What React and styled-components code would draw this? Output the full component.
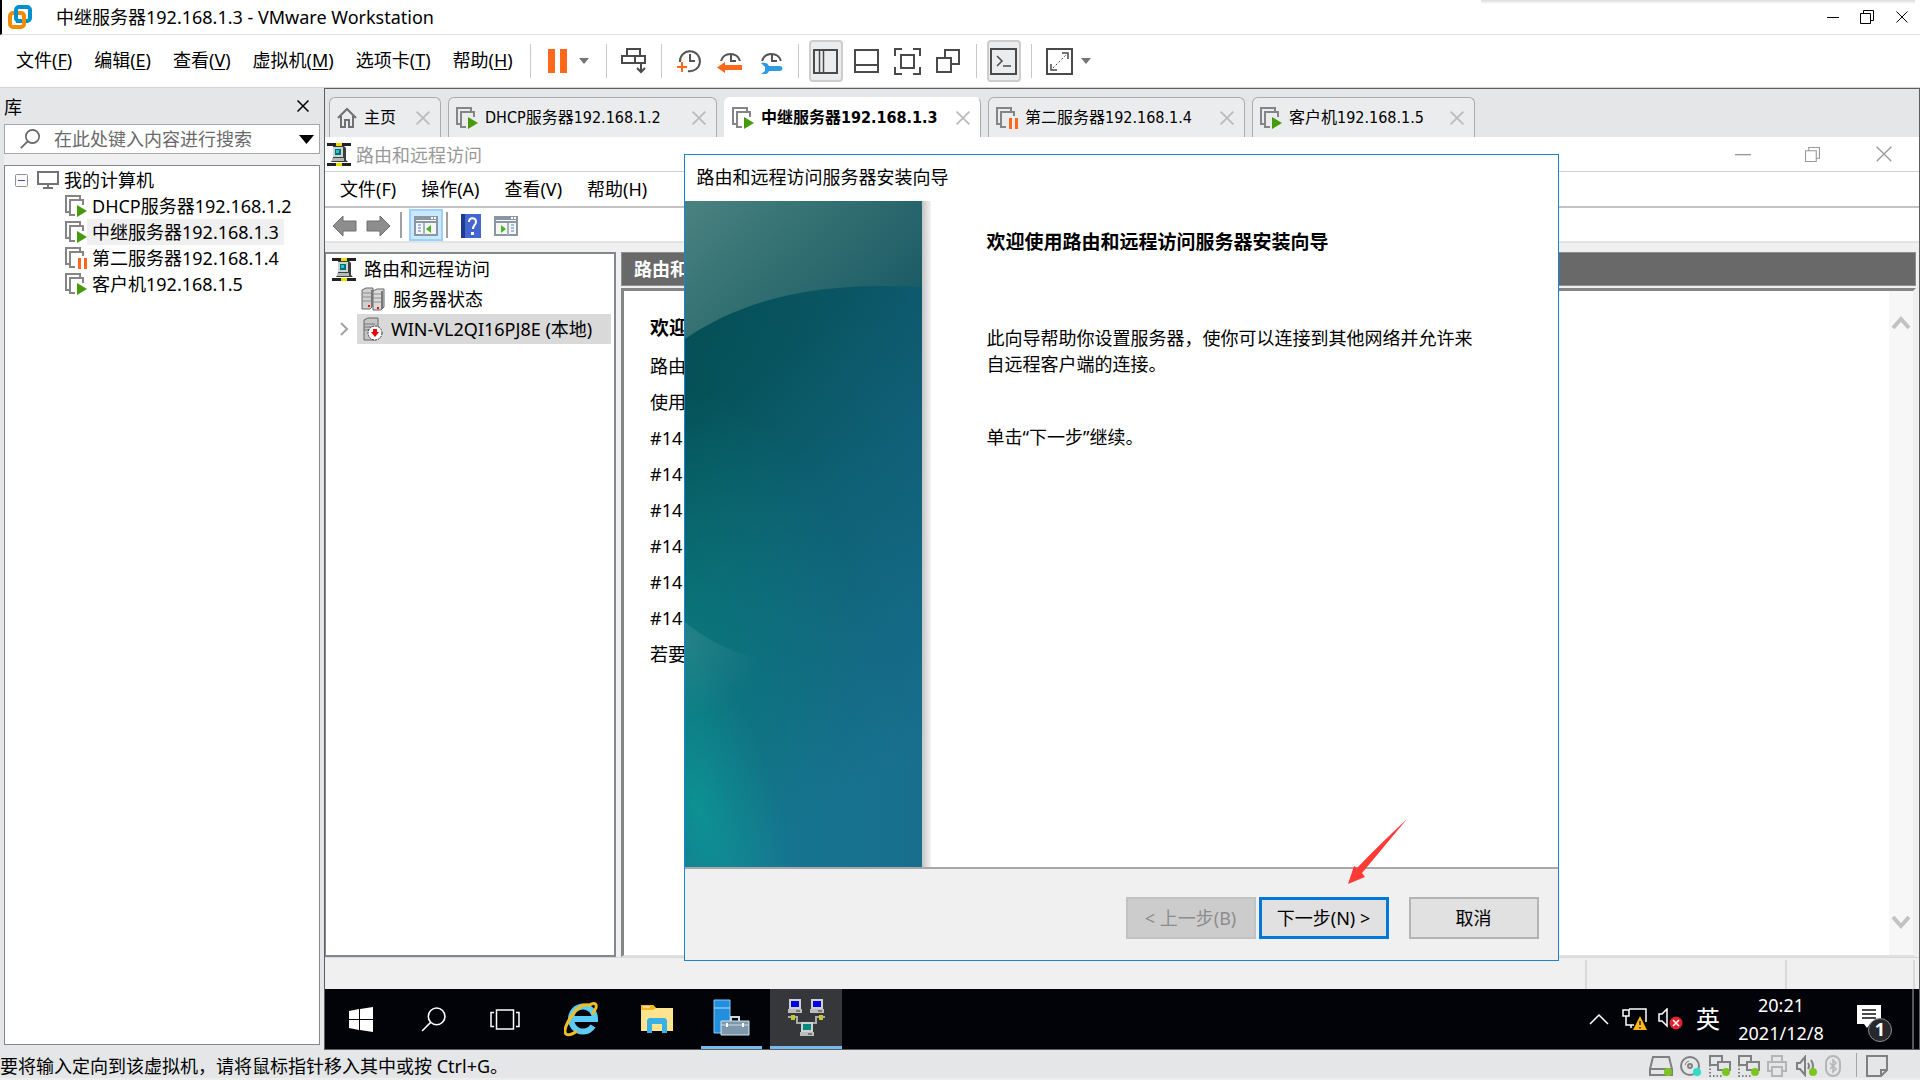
import React from "react";
import styled, { createGlobalStyle, css } from "styled-components";

const uiFont = '"Noto Sans", "Noto Sans CJK SC", sans-serif';
const tabFont = '"DejaVu Sans Condensed", "Noto Sans CJK SC", sans-serif';

const GlobalStyle = createGlobalStyle`
  * { box-sizing: border-box; }
  body { margin: 0; background: #e4e6e8; }
  body, button, input { font-family: ${uiFont}; font-size: 18px; color: #000; }
  button { margin: 0; padding: 0; border: 0; background: none; white-space: nowrap; line-height: 24px; }
  ul { list-style: none; margin: 0; padding: 0; }
  h1, h2, p { margin: 0; font-weight: 400; font-size: 18px; }
  svg { display: block; flex: none; }
`;

/* ---------- host window ---------- */

const Window = styled.div`
  display: flex;
  flex-direction: column;
  height: 100vh;
  min-width: 1300px;
  overflow: hidden;
`;

const TitleBar = styled.header`
  display: flex;
  align-items: center;
  height: 35px;
  padding-left: 6px;
  border-left: 2px solid #000;
  border-bottom: 1px solid #dfdfdf;
  background: #fff;
  position: relative;
  h1 { flex: 1; margin-left: 24px; line-height: 34px; }
`;

const TopShade = styled.div`
  position: absolute;
  top: 0;
  right: 5px;
  width: 434px;
  height: 4px;
  background: linear-gradient(#dcdcdc, #fff);
`;

const WindowButton = styled.button`
  display: flex;
  align-items: center;
  justify-content: center;
  width: ${(p) => p.$w}px;
  height: 32px;
`;

const MenuBar = styled.div`
  display: flex;
  align-items: center;
  height: 53px;
  background: #fff;
  border-bottom: 1px solid #d4d4d4;
`;

const Menus = styled.nav`
  display: flex;
  gap: 22px;
  padding: 0 17px 2px 16px;
  u { text-underline-offset: 2px; text-decoration-thickness: 1px; }
`;

const ToolGroup = styled.div`
  display: flex;
  align-items: center;
  gap: 7px;
  height: 34px;
  padding: 0 10px;
  border-left: 1px solid #c9c9c9;
`;

const ToolButton = styled.button`
  display: flex;
  align-items: center;
  justify-content: center;
  gap: ${(p) => p.$gap || 0}px;
  width: ${(p) => p.$w || 34}px;
  height: 42px;
  border-radius: 4px;
  ${(p) => p.$on && css`background: #ebecee; border: 2px solid #cdcdcd;`}
`;

const Workspace = styled.main`
  display: flex;
  flex: 1;
  min-height: 0;
`;

/* ---------- library panel ---------- */

const Library = styled.aside`
  display: flex;
  flex-direction: column;
  flex: none;
  width: 324px;
  padding: 0 4px 5px;
  background: #e4e6e8;
`;

const LibraryHead = styled.div`
  display: flex;
  align-items: center;
  justify-content: space-between;
  height: 36px;
  padding-right: 11px;
`;

const SearchBox = styled.label`
  display: flex;
  align-items: center;
  height: 30px;
  padding: 0 5px 0 15px;
  background: #fff;
  border: 1px solid #a6a6a6;
  input { flex: 1; min-width: 0; margin-left: 14px; padding: 0; border: 0; outline: 0; background: none; line-height: 26px; }
  input::placeholder { color: #6a6a6a; opacity: 1; }
`;

const LibraryTree = styled.ul`
  flex: 1;
  margin-top: 11px;
  padding-top: 1px;
  background: #fff;
  border: 1px solid #828790;
  box-shadow: 0 -11px 0 #f0f0f0;
`;

const LibraryRow = styled.li`
  display: flex;
  align-items: center;
  height: 26px;
  padding-left: ${(p) => (p.$child ? 60 : 10)}px;
  button { height: 26px; padding: 0 5px; background: ${(p) => (p.$on ? "#f0f0f0" : "none")}; }
  svg + svg { margin-left: 9px; }
`;

/* ---------- tabs ---------- */

const Stage = styled.section`
  display: flex;
  flex-direction: column;
  flex: 1;
  min-width: 0;
  border: 1px solid #5c5e60;
`;

const Tabs = styled.div`
  display: flex;
  gap: 7px;
  height: 48px;
  padding: 8px 0 0 4px;
  background: #e4e6e8;
`;

const Tab = styled.div`
  display: flex;
  align-items: center;
  width: ${(p) => p.$w}px;
  padding: 0 10px 0 7px;
  border: 1px solid #a9abae;
  border-bottom: 0;
  border-radius: 6px 6px 0 0;
  background: ${(p) => (p.$on ? "#fff" : "#ebecee")};
  ${(p) => p.$on && "border-color: #fff #a9abae #fff #fff;"}
  button:first-of-type {
    flex: 1;
    margin-left: 7px;
    text-align: left;
    font-family: ${tabFont};
    font-size: 16px;
    font-weight: ${(p) => (p.$on ? 700 : 400)};
  }
`;

/* ---------- guest desktop ---------- */

const Guest = styled.div`
  position: relative;
  display: flex;
  flex-direction: column;
  flex: 1;
  min-height: 0;
  background: #f0f0f0;
`;

const GuestTitle = styled.div`
  display: flex;
  align-items: center;
  height: 35px;
  padding-left: 2px;
  background: #fff;
  border-bottom: 1px solid #d0d0d0;
  h2 { flex: 1; margin-left: 5px; color: #999; }
`;

const GuestMenus = styled.nav`
  display: flex;
  align-items: center;
  gap: 25px;
  height: 36px;
  padding-left: 15px;
  background: #fff;
  border-bottom: 2px solid #c3c3c3;
`;

const GuestTools = styled.div`
  display: flex;
  align-items: center;
  height: 35px;
  padding: 1px 0 0 7px;
  background: #fff;
  border-bottom: 2px solid #e3e3e3;
`;

const GuestTool = styled.button`
  display: flex;
  align-items: center;
  justify-content: center;
  width: ${(p) => p.$w || 34}px;
  height: 32px;
  padding-top: 2px;
  ${(p) => p.$on && css`background: #cce8ff; border: 2px solid #99d1ff;`}
`;

const GuestRule = styled.span`
  width: 2px;
  height: 26px;
  margin: 0 ${(p) => p.$after}px 0 ${(p) => p.$before}px;
  background: #a0a0a0;
`;

const Panes = styled.div`
  display: flex;
  gap: 5px;
  flex: 1;
  min-height: 0;
  padding: 9px 3px 0 0;
`;

const ConsoleTree = styled.ul`
  flex: none;
  width: 291px;
  padding: 0 3px 0 6px;
  background: #fff;
  border: 2px solid #828790;
  border-left-width: 1px;
`;

const ConsoleRow = styled.li`
  display: flex;
  align-items: center;
  height: 30px;
  padding-left: ${(p) => p.$indent}px;
`;

const ConsoleItem = styled.button`
  display: flex;
  align-items: center;
  gap: 8px;
  height: 30px;
  ${(p) => p.$on && css`flex: 1; padding: 0 6px; margin-left: 8px; background: #d9d9d9;`}
`;

const Detail = styled.section`
  display: flex;
  flex-direction: column;
  flex: 1;
  min-width: 0;
`;

const DetailHead = styled.div`
  height: 34px;
  padding-left: 12px;
  line-height: 32px;
  font-weight: 700;
  color: #fff;
  background: #696969;
  border: 1px solid #8f8f8f;
`;

const DetailBody = styled.div`
  display: flex;
  flex: 1;
  margin-top: 2px;
  background: #fff;
  border: 3px solid #858585;
  border-right: 3px solid #f0f0f0;
  border-bottom: 2px solid #e0e0e0;
`;

const Article = styled.div`
  flex: 1;
  padding: 17px 26px;
  h2 { font-size: 19px; font-weight: 700; line-height: 40px; }
  p { line-height: 36px; }
`;

const Scroll = styled.div`
  display: flex;
  flex-direction: column;
  justify-content: space-between;
  align-items: center;
  width: 24px;
  padding: 25px 0 26px;
  background: #f7f7f7;
`;

const ConsoleStatus = styled.div`
  display: flex;
  justify-content: flex-end;
  height: 32px;
  padding-right: 4px;
  border-top: 1px solid #d7d7d7;
  span { border-right: 2px solid #d9d9d9; margin-top: 2px; width: 200px; }
  span:last-child { width: 128px; }
`;

/* ---------- wizard ---------- */

const WizardLayer = styled.div`
  position: absolute;
  inset: 17px 0 auto;
  display: flex;
  justify-content: center;
  padding-right: 2px;
`;

const Wizard = styled.div`
  width: 875px;
  background: #fff;
  border: 1px solid #1883d7;
  > h2 { height: 46px; padding-left: 12px; line-height: 44px; }
`;

const WizardBody = styled.div`
  display: flex;
  height: 666px;
`;

const WizardShade = styled.div`
  width: 9px;
  background: linear-gradient(90deg, #c4c4c4, #f4f4f4);
`;

const WizardText = styled.div`
  width: 560px;
  padding: 22px 0 0 56px;
  h2 { font-size: 19px; line-height: 38px; font-weight: 700; }
  p { line-height: 26px; }
  p:nth-of-type(1) { margin-top: 64px; }
  p:nth-of-type(2) { margin-top: 47px; }
`;

const WizardFoot = styled.div`
  display: flex;
  justify-content: flex-end;
  height: 93px;
  padding: 28px 19px 0;
  background: #f0f0f0;
  border-top: 2px solid #a8a8a8;
  position: relative;
`;

const WizardButton = styled.button`
  width: 130px;
  height: 42px;
  margin-left: ${(p) => p.$gap}px;
  background: #e1e1e1;
  border: 2px solid #b4b4b4;
  ${(p) => p.$main && "border: 3px solid #0078d7;"}
  &:disabled { color: #8c8c8c; background: #ccc; border-color: #c2c2c2; }
`;

const Pointer = styled.svg`
  position: absolute;
  right: 150px;
  top: -50px;
`;

/* ---------- taskbar ---------- */

const Taskbar = styled.div`
  display: flex;
  height: 60px;
  background: #010308;
  color: #fff;
`;

const TaskButton = styled.button`
  display: flex;
  align-items: center;
  justify-content: center;
  width: ${(p) => p.$w || 72}px;
  height: 60px;
  margin-left: ${(p) => p.$gap || 0}px;
  ${(p) => p.$open && "border-bottom: 3px solid #76b9ed;"}
  ${(p) => p.$on && "background: #35373b;"}
`;

const Tray = styled.div`
  display: flex;
  align-items: center;
  margin-left: auto;
  border-right: 2px solid #55575a;
  margin-right: 5px;
`;

const InputMode = styled.button`
  width: 40px;
  font-size: 24px;
  line-height: 30px;
  color: #fff;
`;

const Clock = styled.button`
  width: 106px;
  line-height: 28px;
  color: #fff;
`;

const Notice = styled.button`
  position: relative;
  width: 36px;
  height: 60px;
  margin: 0 19px 0 23px;
  svg { margin-bottom: 4px; }
`;

const Badge = styled.span`
  position: absolute;
  left: 11px;
  top: 29px;
  width: 24px;
  height: 24px;
  border: 1px solid #8a8a8a;
  border-radius: 50%;
  background: #26282b;
  color: #fff;
  font-weight: 700;
  line-height: 21px;
`;

/* ---------- host status bar ---------- */

const StatusBar = styled.footer`
  display: flex;
  align-items: center;
  height: 30px;
  background: #e4e6e8;
  border-bottom: 2px solid #eee;
  > span { flex: 1; line-height: 26px; padding-top: 3px; }
`;

const StatusIcons = styled.div`
  display: flex;
  align-items: center;
  gap: 7px;
  padding-top: 3px;
`;

const StatusSep = styled.i`
  width: 1px;
  height: 24px;
  background: #a5a5a5;
  margin: 2px 9px 0 15px;
`;

const StatusRight = styled.div`
  padding: 3px 32px 0 0;
`;

/* ---------- icons ---------- */

const Cross = ({ s = 12, c = "#000", w = 1 }) => (
  <svg width={s} height={s} viewBox="0 0 12 12" stroke={c} strokeWidth={w} fill="none">
    <path d="M.5 .5 11.5 11.5M11.5 .5 .5 11.5" />
  </svg>
);
const Minus = ({ s = 12, c = "#000" }) => (
  <svg width={s} height={s} viewBox="0 0 12 12" stroke={c}><path d="M0 6.5h12" /></svg>
);
const Restore = ({ s = 14, c = "#000" }) => (
  <svg width={s} height={s} viewBox="0 0 14 14" stroke={c} fill="none">
    <path d="M.5 3.5h10v10H.5zM3.5 3V.5h10v10H11" />
  </svg>
);
const Caret = ({ w = 10, c = "#757575" }) => (
  <svg width={w} height={w * 0.6} viewBox="0 0 10 6" fill={c}><path d="M0 0h10L5 6z" /></svg>
);
const Logo = () => (
  <svg width="24" height="25" viewBox="0 0 24 25" fill="none" strokeWidth="4">
    <rect x="8" y="2" width="14" height="14" rx="3" stroke="#0091cd" />
    <rect x="2" y="8" width="14" height="14" rx="3" stroke="#f38b00" />
    <path d="M8 12V5M8 16h6" stroke="#0091cd" />
  </svg>
);
const Pause = () => (
  <svg width="19" height="24" viewBox="0 0 19 24" fill="#ff671b"><path d="M0 0h7v24H0zM12 0h7v24h-7z" /></svg>
);
const SendKeys = () => (
  <svg width="26" height="26" viewBox="0 0 26 26" fill="none" stroke="#4a4a4a" strokeWidth="2">
    <path d="M6 1h13v7H6zM1 8h13v7H1zM14 8h10v7H14zM20 15v9M16 20l4 4 4-4" />
  </svg>
);
const Snapshot = ({ kind }) => (
  <svg width="26" height="26" viewBox="0 0 26 26" fill="none" stroke="#555" strokeWidth="2">
    {kind === "take" ? <path d="M4 14a10 10 0 1 1 8 9" /> : <path d="M4 13a10 10 0 0 1 19 0" />}
    <path d="M14 6v7h5" />
    {kind === "take" && <path d="M1 19h10M6 14v10" stroke="#ff671b" />}
    {kind === "revert" && <path d="M8 14v3h17v5H8v3L0 19.500z" fill="#ff671b" stroke="none" />}
    {kind === "manage" && (
      <path d="M3 15c4-1 7 0 8 3h11a2.500 2.500 0 0 1 0 5H11c-1 3-4 4-8 3l4-3v-4z" fill="#2f9be0" stroke="none" />
    )}
  </svg>
);
const Panel = ({ kind }) => (
  <svg width="27" height="27" viewBox="0 0 27 27" fill="none" stroke="#4a4a4a" strokeWidth="2">
    {kind === "side" && <><path d="M2 2h23v23H2z" /><path d="M7.500 2v23M11.500 2v23" strokeWidth="1.500" /></>}
    {kind === "bottom" && <path d="M2 2h23v22H2zM2 17h23" />}
    {kind === "full" && <path d="M7 7h13v13H7zM1 8V1h7M19 1h7v7M26 19v7h-7M8 26H1v-7" />}
    {kind === "unity" && <path d="M2 10h14v14H2zM10 10V2h14v14h-8" />}
    {kind === "console" && <><path d="M1 1h25v25H1z" /><path d="M7 8l5 5-5 5M13 18h8" strokeWidth="1.500" /></>}
    {kind === "stretch" && (
      <>
        <path d="M1 1h25v25H1z" />
        <path d="M16 5h6v6M5 16v6h6" strokeWidth="1.500" />
        <path d="M7 20 20 7" strokeDasharray="2 2" strokeWidth="1" />
      </>
    )}
  </svg>
);
const Search = ({ s = 20, c = "#666", w = 2 }) => (
  <svg width={s} height={s} viewBox="0 0 24 24" fill="none" stroke={c} strokeWidth={w}>
    <circle cx="15" cy="9" r="8" /><path d="M9.500 14.500 1 23" />
  </svg>
);
const Expander = () => (
  <svg width="13" height="13" viewBox="0 0 13 13" fill="#fafafa" stroke="#919191">
    <rect x=".5" y=".5" width="12" height="12" rx="1" /><path d="M3 6.500h7" stroke="#3f5aa8" />
  </svg>
);
const Monitor = () => (
  <svg width="22" height="18" viewBox="0 0 22 18" fill="none" stroke="#737373" strokeWidth="2">
    <path d="M1 1h20v12H1zM11 13v4M6 17h10" />
  </svg>
);
const Vm = ({ paused }) => (
  <svg width="22" height="22" viewBox="0 0 22 22" fill="none" stroke="#858585" strokeWidth="2">
    <path d="M4 17H1V1h14v3" />
    {paused ? <path d="M10 20H5V5h13v4" /> : <path d="M10 20H5V5h13v5" />}
    {paused ? <path d="M13 11h3v11h-3zM19 11h3v11h-3z" fill="#ff671b" stroke="none" />
      : <path d="M12 10l10 6-10 6z" fill="#459b0b" stroke="none" />}
  </svg>
);
const Home = () => (
  <svg width="20" height="21" viewBox="0 0 20 21" fill="none" stroke="#707070" strokeWidth="2">
    <path d="M1 11 10 2l9 9M4 9v11h4v-7h4v7h4V9" />
  </svg>
);
const Routing = () => (
  <svg width="24" height="23" viewBox="0 0 24 23">
    <path d="M0 0h24v3H0zM0 20h24v3H0z" fill="#222" />
    <path d="M9 0h6v3H9zM9 20h6v3H9z" fill="#e6de00" />
    <path d="M6 3h11l2 2v12l2 2H4l2-3z" fill="#3a3f42" /><path d="M6 4h10v10H6z" fill="#cfd3d3" />
    <path d="M8 6h6v6H8z" fill="#056f77" /><path d="M9 7h3v3H9z" fill="#22c9c7" /><path d="M5 15h12v3H5z" fill="#b6b9b9" />
  </svg>
);
const Arrow = ({ flip }) => (
  <svg width="25" height="22" viewBox="0 0 25 22" fill="#8d8d8d" stroke="#6f6f6f">
    <path transform={flip ? "translate(25 0) scale(-1 1)" : undefined} d="M1 11 11 1v5h13v10H11v5z" />
  </svg>
);
const PaneIcon = ({ right }) => (
  <svg width="24" height="20" viewBox="0 0 24 20">
    <path d="M1 1h22v18H1z" fill="#f6f6f6" stroke="#8b96a3" strokeWidth="2" />
    <path d="M1 1h22v3H1zM1 5h22v2H1z" fill="#8b96a3" /><path d="M17 1h2v2h-2zM20 1h2v2h-2z" fill="#fff" />
    <g transform={right ? "translate(24 0) scale(-1 1)" : undefined}>
      <path d="M9 7h2v12H9z" fill="#a9b1bb" />
      <path d="M4 9h3M4 12h3M4 15h3" stroke="#4a86cf" />
      <path d="M17 9v8l-5-4z" fill="#48b622" />
    </g>
  </svg>
);
const Help = () => (
  <svg width="20" height="24" viewBox="0 0 20 24">
    <path d="M0 0h20v24H0z" fill="#4467cf" /><path d="M0 0h4v24H0z" fill="#1e3a93" />
    <path d="M8 8c0-5 7-5 7 0 0 3-3 3-3 7" fill="none" stroke="#fff" strokeWidth="2" /><path d="M10 18h3v3h-3z" fill="#fff" />
  </svg>
);
const Servers = () => (
  <svg width="24" height="24" viewBox="0 0 24 24" stroke="#666">
    <path d="M1 3l4-2h7v18l-3 3H1z" fill="#cfcfcf" /><path d="M12 4l4-2h7v18l-3 3h-8z" fill="#dadada" />
    <path d="M2 6h8M2 10h8M2 14h8M12 7h8M12 11h8M12 15h8" stroke="#8d8d8d" /><path d="M21 4v18M11 3v17" stroke="#777" strokeWidth="2" />
    <path d="M7 18h2v2H7zM16 20h2v2h-2z" fill="red" stroke="none" />
  </svg>
);
const ServerDown = () => (
  <svg width="20" height="24" viewBox="0 0 20 24">
    <path d="M1 3l4-2h10v20l-3 2H1z" fill="#c5c5c5" stroke="#666" /><path d="M1 7h11M1 10h11M1 13h6" stroke="#777" />
    <circle cx="12" cy="16" r="7" fill="#fff" stroke="#333" strokeDasharray="2 1" />
    <path d="M10 12h4v3h2l-4 5-4-5h2z" fill="#f00000" />
  </svg>
);
const Chevron = ({ d, w, h, c, sw = 2 }) => (
  <svg width={w} height={h} viewBox={`0 0 ${w} ${h}`} fill="none" stroke={c} strokeWidth={sw}><path d={d} /></svg>
);
const WizardArt = () => (
  <svg width="237" height="666" viewBox="0 0 237 666" preserveAspectRatio="none">
    <defs>
      <linearGradient id="base" x1="0" y1="0" x2=".25" y2="1">
        <stop offset="0" stopColor="#034c52" /><stop offset=".3" stopColor="#045257" />
        <stop offset=".6" stopColor="#0b6370" /><stop offset="1" stopColor="#157991" />
      </linearGradient>
      <linearGradient id="top" x1="0" y1="0" x2="1" y2=".6">
        <stop offset="0" stopColor="#4a827f" /><stop offset=".6" stopColor="#2d6b6f" /><stop offset="1" stopColor="#1c5c66" />
      </linearGradient>
      <linearGradient id="side" x1="0" y1="0" x2="1" y2="0">
        <stop offset="0" stopColor="#1a5f88" stopOpacity="0" /><stop offset="1" stopColor="#1a5f88" stopOpacity=".4" />
      </linearGradient>
      <radialGradient id="mid">
        <stop offset="0" stopColor="#0a8583" stopOpacity=".5" /><stop offset=".5" stopColor="#0a8583" stopOpacity=".25" /><stop offset="1" stopColor="#0a8583" stopOpacity="0" />
      </radialGradient>
      <radialGradient id="low">
        <stop offset="0" stopColor="#0c9a97" stopOpacity=".75" /><stop offset=".5" stopColor="#0c9a97" stopOpacity=".35" /><stop offset="1" stopColor="#0c9a97" stopOpacity="0" />
      </radialGradient>
      <radialGradient id="edge" gradientUnits="userSpaceOnUse" cx="0" cy="435" r="80">
        <stop offset="0" stopColor="#fff" stopOpacity=".1" /><stop offset="1" stopColor="#fff" stopOpacity="0" />
      </radialGradient>
    </defs>
    <path d="M0 0h237v666H0z" fill="url(#base)" />
    <path d="M0 0h237v666H0z" fill="url(#side)" />
    <ellipse cx="0" cy="440" rx="170" ry="250" fill="url(#mid)" />
    <ellipse cx="14" cy="610" rx="80" ry="190" transform="rotate(-16 14 610)" fill="url(#low)" />
    <path d="M0 421Q28 445 70 457L110 530H0z" fill="url(#edge)" />
    <path d="M0 0h237v86C150 82 70 90 0 138z" fill="url(#top)" />
  </svg>
);
const Start = () => (
  <svg width="24" height="25" viewBox="0 0 24 25" fill="#fff"><path d="M0 4l10-2v10H0zM11 2l13-2v12H11zM0 13h10v10L0 21zM11 13h13v12l-13-2z" /></svg>
);
const TaskView = () => (
  <svg width="30" height="21" viewBox="0 0 30 21" fill="none" stroke="#fff" strokeWidth="1.500">
    <path d="M6.500 1h17v19h-17zM4 3.500H1v14h3M26 3.500h3v14h-3" />
  </svg>
);
const Explorer = () => (
  <svg width="34" height="36" viewBox="0 0 34 36" fill="none">
    <path d="M29 25a12 12.500 0 1 1 2-7H9" stroke="#5ccbf5" strokeWidth="6" />
    <path d="M24 5C33-1 35 5 28 13M9 13C3 21-1 30 2 33c3 2 7 0 11-3" stroke="#f3bd24" strokeWidth="3" />
    <path d="M9 13C14 6 20 3 25 4" stroke="#f3bd24" strokeWidth="3" />
  </svg>
);
const Folder = () => (
  <svg width="32" height="28" viewBox="0 0 32 28">
    <path d="M0 0h12l3 3h17v23H0z" fill="#ffe48f" /><path d="M0 0h12l3 3-3 2H0z" fill="#f5b81e" />
    <path d="M6 28V15l2-2h16l2 2v13h-5v-9H11v9z" fill="#3ab0e6" /><path d="M2 2h7" stroke="#fff" />
  </svg>
);
const ServerManager = () => (
  <svg width="37" height="37" viewBox="0 0 37 37">
    <path d="M1 1h16v33H1z" fill="#218fdd" stroke="#8ac9f5" /><path d="M1 9h16" stroke="#b9e0fb" />
    <path d="M8 22h28v14H8z" fill="#7d98ac" stroke="#d5e5ee" /><path d="M18 22v-4h8v4" fill="none" stroke="#c8dce8" strokeWidth="2" />
    <path d="M8 26h28" stroke="#c8dce8" /><path d="M14 24v4M30 24v4" stroke="#fff" strokeWidth="2" />
  </svg>
);
const Pc = ({ x, y, c }) => (
  <g transform={`translate(${x} ${y})`}>
    <path d="M1 0h12v10H1z" fill="#d0d0d0" /><path d="M3 2h8v6H3z" fill={c} /><path d="M0 10h14v4H0z" fill="#bcbcbc" /><path d="M8 12h4" stroke="#333" />
  </g>
);
const Network = () => (
  <svg width="37" height="37" viewBox="0 0 37 37">
    <path d="M0 18h9v6h5M37 18h-9v6h-5" fill="none" stroke="#aaa" strokeWidth="2" />
    <path d="M3 16h4v5H3zM31 16h4v5h-4z" fill="#c9c62c" />
    <Pc x={0} y={0} c="#0000e6" /><Pc x={22} y={0} c="#0000e6" /><Pc x={12} y={23} c="#008a82" />
  </svg>
);
const NetWarn = () => (
  <svg width="25" height="22" viewBox="0 0 25 22" fill="none" stroke="#fff" strokeWidth="1.500">
    <path d="M7 1h17v13M1 2h6v6H1zM4 8v9h8M9 17v3" />
    <path d="M18 8l7 14H11z" fill="#fdb714" stroke="none" /><path d="M18 13v4M18 19v1.500" stroke="#222" />
  </svg>
);
const Muted = () => (
  <svg width="25" height="22" viewBox="0 0 25 22" fill="none" stroke="#fff" strokeWidth="1.500">
    <path d="M9 1v17l-5-5H1V6h3z" /><circle cx="18" cy="15" r="6.500" fill="#e0232e" stroke="none" /><path d="M15 12l6 6M21 12l-6 6" />
  </svg>
);
const Message = () => (
  <svg width="24" height="24" viewBox="0 0 24 24"><path d="M0 0h24v19H13l-3 4-3-4H0z" fill="#fff" /><path d="M5 5h14M5 9h14M5 13h14" stroke="#111" strokeWidth="1.500" /></svg>
);
const Device = ({ kind, w = 22 }) => (
  <svg width={w} height="22" viewBox={`0 0 ${w} 22`} fill="none" stroke={kind === "print" || kind === "bt" ? "#b5b5b5" : "#808080"} strokeWidth="2">
    {kind === "disk" && <path d="M1 14 4 2h16l3 12v6H1zM1 14h22" />}
    {kind === "cd" && <><circle cx="10" cy="11" r="9" /><circle cx="10" cy="11" r="2" /><path d="M5 10a5 5 0 0 1 4-4" strokeWidth="1" /></>}
    {kind === "net" && <><path d="M9 10H1V1h12v5M9 7h12v8H9z" /><path d="M1 10v11h12" strokeDasharray="1.500 2" /></>}
    {kind === "print" && <path d="M5 7V1h10v6M5 16H1V7h18v9h-4M5 12h10v9H5z" />}
    {kind === "sound" && <path d="M9 2v18l-5-6H1V8h3zM12 8q2 3 0 6M15 5q4 6 0 11" />}
    {kind === "bt" && <><rect x="1" y="1" width="14" height="20" rx="7" /><path d="M5 8l6 6-3 3V5l3 3-6 6" strokeWidth="1.500" /></>}
    {kind === "note" && <path d="M1 1h20v14l-6 6H1zM21 15h-6v6" />}
    {["disk", "net", "sound"].includes(kind) && <circle cx={w - 5} cy="17" r="4" fill="#7cc520" stroke="none" />}
    {kind === "cd" && <circle cx={w - 5} cy="17" r="4" fill="#2fdccb" stroke="none" />}
  </svg>
);

/* ---------- data ---------- */

const menus = [["文件", "F"], ["编辑", "E"], ["查看", "V"], ["虚拟机", "M"], ["选项卡", "T"], ["帮助", "H"]];
const machines = [
  { name: "DHCP服务器192.168.1.2", w: 269 },
  { name: "中继服务器192.168.1.3", w: 257, on: true },
  { name: "第二服务器192.168.1.4", w: 257, paused: true },
  { name: "客户机192.168.1.5", w: 223 },
];
const article = ["路由", "使用", "#14", "#14", "#14", "#14", "#14", "#14", "若要"];

export default function App() {
  return (
    <Window>
      <GlobalStyle />
      <TitleBar>
        <TopShade />
        <Logo />
        <h1>中继服务器192.168.1.3 - VMware Workstation</h1>
        <WindowButton $w={34} aria-label="最小化"><Minus /></WindowButton>
        <WindowButton $w={34} aria-label="还原"><Restore /></WindowButton>
        <WindowButton $w={36} aria-label="关闭"><Cross /></WindowButton>
      </TitleBar>
      <MenuBar>
        <Menus>
          {menus.map(([label, key]) => <button key={key}>{label}(<u>{key}</u>)</button>)}
        </Menus>
        <ToolGroup><ToolButton $w={55} $gap={12} aria-label="挂起"><Pause /><Caret /></ToolButton></ToolGroup>
        <ToolGroup><ToolButton aria-label="发送按键"><SendKeys /></ToolButton></ToolGroup>
        <ToolGroup>
          {["take", "revert", "manage"].map((k) => <ToolButton key={k} aria-label={k}><Snapshot kind={k} /></ToolButton>)}
        </ToolGroup>
        <ToolGroup>
          {["side", "bottom", "full", "unity"].map((k) => <ToolButton key={k} $on={k === "side"} aria-label={k}><Panel kind={k} /></ToolButton>)}
        </ToolGroup>
        <ToolGroup><ToolButton $on aria-label="控制台"><Panel kind="console" /></ToolButton></ToolGroup>
        <ToolGroup><ToolButton $w={54} $gap={8} aria-label="拉伸"><Panel kind="stretch" /><Caret /></ToolButton></ToolGroup>
      </MenuBar>
      <Workspace>
        <Library>
          <LibraryHead>库<button aria-label="关闭库"><Cross w={1.5} /></button></LibraryHead>
          <SearchBox>
            <Search />
            <input type="text" placeholder="在此处键入内容进行搜索" aria-label="搜索" />
            <button aria-label="搜索选项"><Caret w={15} c="#000" /></button>
          </SearchBox>
          <LibraryTree>
            <LibraryRow><Expander /><Monitor /><button>我的计算机</button></LibraryRow>
            {machines.map((m) => (
              <LibraryRow key={m.name} $child $on={m.on}><Vm paused={m.paused} /><button>{m.name}</button></LibraryRow>
            ))}
          </LibraryTree>
        </Library>
        <Stage>
          <Tabs>
            <Tab $w={112}><Home /><button>主页</button><button aria-label="关闭"><Cross s={14} c="#bbb" w={1.5} /></button></Tab>
            {machines.map((m) => (
              <Tab key={m.name} $w={m.w} $on={m.on}>
                <Vm paused={m.paused} /><button>{m.name}</button>
                <button aria-label="关闭"><Cross s={14} c="#bbb" w={1.5} /></button>
              </Tab>
            ))}
          </Tabs>
          <Guest>
            <GuestTitle>
              <Routing /><h2>路由和远程访问</h2>
              <WindowButton $w={69} aria-label="最小化"><Minus s={16} c="#999" /></WindowButton>
              <WindowButton $w={71} aria-label="还原"><Restore s={15} c="#999" /></WindowButton>
              <WindowButton $w={71} aria-label="关闭"><Cross s={16} c="#999" /></WindowButton>
            </GuestTitle>
            <GuestMenus>
              {["文件(F)", "操作(A)", "查看(V)", "帮助(H)"].map((m) => <button key={m}>{m}</button>)}
            </GuestMenus>
            <GuestTools>
              <GuestTool $w={25} aria-label="后退"><Arrow /></GuestTool>
              <GuestTool $w={43} aria-label="前进"><Arrow flip /></GuestTool>
              <GuestRule $before={0} $after={7} />
              <GuestTool $on aria-label="显示控制台树"><PaneIcon /></GuestTool>
              <GuestRule $before={3} $after={6} />
              <GuestTool aria-label="帮助"><Help /></GuestTool>
              <GuestTool $w={36} aria-label="显示操作窗格"><PaneIcon right /></GuestTool>
            </GuestTools>
            <Panes>
              <ConsoleTree>
                <ConsoleRow $indent={0}><ConsoleItem><Routing />路由和远程访问</ConsoleItem></ConsoleRow>
                <ConsoleRow $indent={29}><ConsoleItem><Servers />服务器状态</ConsoleItem></ConsoleRow>
                <ConsoleRow $indent={7}>
                  <Chevron w={10} h={14} c="#a3a3a3" d="M2 1l6 6-6 6" />
                  <ConsoleItem $on><ServerDown />WIN-VL2QI16PJ8E (本地)</ConsoleItem>
                </ConsoleRow>
              </ConsoleTree>
              <Detail>
                <DetailHead>路由和</DetailHead>
                <DetailBody>
                  <Article>
                    <h2>欢迎</h2>
                    {article.map((t, i) => <p key={i}>{t}</p>)}
                  </Article>
                  <Scroll>
                    <Chevron w={20} h={14} c="#c2c2c2" sw={4} d="M2 12l8-9 8 9" />
                    <Chevron w={20} h={14} c="#c2c2c2" sw={4} d="M2 2l8 9 8-9" />
                  </Scroll>
                </DetailBody>
              </Detail>
            </Panes>
            <ConsoleStatus><span /><span /><span /></ConsoleStatus>
            <Taskbar>
              <TaskButton aria-label="开始"><Start /></TaskButton>
              <TaskButton aria-label="搜索"><Search s={25} c="#fff" w={1.5} /></TaskButton>
              <TaskButton aria-label="任务视图"><TaskView /></TaskButton>
              <TaskButton $gap={4} aria-label="Internet Explorer"><Explorer /></TaskButton>
              <TaskButton $gap={4} aria-label="文件资源管理器"><Folder /></TaskButton>
              <TaskButton $w={61} $gap={8} $open aria-label="服务器管理器"><ServerManager /></TaskButton>
              <TaskButton $gap={8} $open $on aria-label="路由和远程访问"><Network /></TaskButton>
              <Tray>
                <TaskButton $w={34} aria-label="显示隐藏的图标"><Chevron w={20} h={12} c="#fff" sw={1.5} d="M1 11l9-9 9 9" /></TaskButton>
                <TaskButton $w={36} aria-label="网络"><NetWarn /></TaskButton>
                <TaskButton $w={36} aria-label="音量"><Muted /></TaskButton>
                <InputMode>英</InputMode>
                <Clock>20:21<br />2021/12/8</Clock>
                <Notice aria-label="通知"><Message /><Badge>1</Badge></Notice>
              </Tray>
            </Taskbar>
            <WizardLayer>
              <Wizard role="dialog" aria-labelledby="wizard-title">
                <h2 id="wizard-title">路由和远程访问服务器安装向导</h2>
                <WizardBody>
                  <WizardArt />
                  <WizardShade />
                  <WizardText>
                    <h2>欢迎使用路由和远程访问服务器安装向导</h2>
                    <p>此向导帮助你设置服务器，使你可以连接到其他网络并允许来<br />自远程客户端的连接。</p>
                    <p>单击“下一步”继续。</p>
                  </WizardText>
                </WizardBody>
                <WizardFoot>
                  <WizardButton $gap={0} disabled>&lt; 上一步(B)</WizardButton>
                  <WizardButton $gap={3} $main>下一步(N) &gt;</WizardButton>
                  <WizardButton $gap={20}>取消</WizardButton>
                  <Pointer width="60" height="65" viewBox="0 0 60 65" fill="#ff3b36">
                    <path d="M59 0 14 54l3 4L0 65 6 47l3 2Q32 25 59 0z" />
                  </Pointer>
                </WizardFoot>
              </Wizard>
            </WizardLayer>
          </Guest>
        </Stage>
      </Workspace>
      <StatusBar>
        <span>要将输入定向到该虚拟机，请将鼠标指针移入其中或按 Ctrl+G。</span>
        <StatusIcons>
          <Device kind="disk" w={24} /><Device kind="cd" /><Device kind="net" /><Device kind="net" />
          <Device kind="print" /><Device kind="sound" /><Device kind="bt" w={16} />
        </StatusIcons>
        <StatusSep />
        <StatusRight><Device kind="note" /></StatusRight>
      </StatusBar>
    </Window>
  );
}
